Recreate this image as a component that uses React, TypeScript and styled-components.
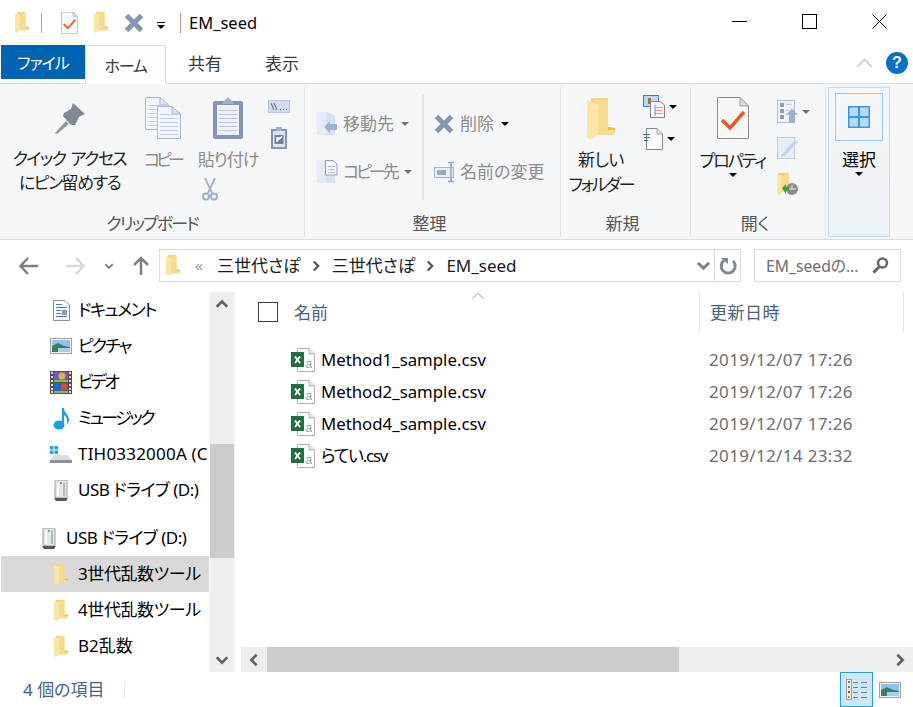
import styled, { createGlobalStyle } from "styled-components";

const GlobalStyle = createGlobalStyle`
  html, body {
    margin: 0;
    padding: 0;
    background: #fff;
  }
  * {
    box-sizing: border-box;
  }
`;

const Folder = ({ w = 14, h = 21 }: { w?: number; h?: number }) => (
  <svg width={w} height={h} viewBox="0 0 14 21">
    <path d="M2 0H10.500V14.500L14 15V17L4 18L2 17Z" fill="#f5d77f" />
    <path d="M10.500 14.500L14 15V17H9Z" fill="#e8bd5c" />
    <path d="M0 1L5.500 3.500V18.500L1.500 21L0 19.500Z" fill="#fbe6a6" />
    <path d="M5.500 3.500V18.500H13.500V16H10.500V1H3Z" fill="#f7dc8b" />
  </svg>
);

const PropsIcon = ({ w, h }: { w: number; h: number }) => (
  <svg width={w} height={h} viewBox="0 0 32 42">
    <path d="M.5.500H23L31.500 9V41.500H.5Z" fill="#f8f8f8" stroke="#8d8d8d" />
    <path d="M23 .5V9H31.500Z" fill="#dcdcdc" stroke="#a0a0a0" />
    <path d="M5 23L13 31L27 15" fill="none" stroke="#ea5a1d" strokeWidth="3.500" />
  </svg>
);

const CrossIcon = ({ s, c = "#8496b0" }: { s: number; c?: string }) => (
  <svg width={s} height={s} viewBox="0 0 20 20">
    <path d="M2.500 2.500L17.500 17.500M17.500 2.500L2.500 17.500" stroke={c} strokeWidth="5" />
  </svg>
);

const PinIcon = () => (
  <svg width="32" height="32" viewBox="0 0 32 32">
    <path d="M19 1L31 12L25 15L21 23L17 23L9 14L10 11L17 7Z" fill="#7f8a94" />
    <path d="M12 19L1 31L3 32L15 22Z" fill="#8f979f" />
  </svg>
);

const PageLines = ({ x, y }: { x: number; y: number }) => (
  <g transform={`translate(${x} ${y})`}>
    <path d="M.5.500H15L23.500 8V32.500H.5Z" fill="#f2f5fb" stroke="#a9b8d2" />
    <path d="M15 .5V8H23.500Z" fill="#dbe3f0" stroke="#a9b8d2" />
    {[8, 12, 16, 20, 24, 28].map((l) => (
      <path key={l} d={`M3 ${l}.5H21`} stroke="#c3cfe3" />
    ))}
  </g>
);

const CopyIcon = () => (
  <svg width="36" height="42" viewBox="0 0 36 42">
    <PageLines x={0} y={0} />
    <PageLines x={12} y={9} />
  </svg>
);

const ClipboardIcon = () => (
  <svg width="30" height="42" viewBox="0 0 30 42">
    <rect x="0" y="4" width="30" height="38" rx="2" fill="#8494b4" />
    <rect x="4" y="8" width="22" height="30" fill="#eef1f8" />
    {[13, 17, 21, 25, 29, 33].map((l) => (
      <path key={l} d={`M6 ${l}.5H24`} stroke="#bfc9dc" />
    ))}
    <path d="M9 7L12 3L15 0L18 3L21 7Z" fill="#a5b1c8" />
  </svg>
);

const PathIcon = () => (
  <svg width="22" height="13" viewBox="0 0 22 13">
    <rect x=".5" y=".5" width="21" height="12" fill="#cfdcef" stroke="#b7c8df" />
    <path d="M3 3L6 10M6 3L9 10" stroke="#55657f" />
    <path d="M12 9.500H13M15 9.500H16M18 9.500H19" stroke="#55657f" />
  </svg>
);

const ShortcutIcon = () => (
  <svg width="16" height="22" viewBox="0 0 16 22">
    <rect x="0" y="2" width="16" height="20" fill="#8494b4" />
    <rect x="2" y="4" width="12" height="16" fill="#dfe5f0" />
    <rect x="5" y="0" width="6" height="4" fill="#a5b1c8" />
    <rect x="3.500" y="8" width="9" height="9" fill="#6f80a0" />
    <path d="M6 15V11H10M7 13L11 9.500" fill="none" stroke="#fff" strokeWidth="1.600" />
  </svg>
);

const ScissorsIcon = () => (
  <svg width="16" height="23" viewBox="0 0 16 23">
    <path d="M3 0L10 15M13 0L6 15" stroke="#a3b1c8" strokeWidth="1.800" />
    <circle cx="4" cy="18.500" r="3" fill="none" stroke="#9fb0cb" strokeWidth="2" />
    <circle cx="12" cy="18.500" r="3" fill="none" stroke="#9fb0cb" strokeWidth="2" />
  </svg>
);

const MoveIcon = () => (
  <svg width="20" height="23" viewBox="0 0 20 23">
    <path d="M0 0H10L18 4V23H0Z" fill="#d6e1f1" />
    <path d="M0 0H9V23H0Z" fill="#e6ecf6" />
    <path d="M7 15L13 9V12H20V18H13V21Z" fill="#9fb3d0" />
  </svg>
);

const CopyToIcon = () => (
  <svg width="22" height="23" viewBox="0 0 22 23">
    <path d="M0 0H10L18 4V23H0Z" fill="#d6e1f1" />
    <path d="M0 0H9V23H0Z" fill="#e6ecf6" />
    <path d="M8.500 .5H16L20 4V15H8.500Z" fill="#f5f7fb" stroke="#8f9db3" />
    <path d="M11 6.500H18M11 9.500H18M11 12.500H18" stroke="#b2bdcd" />
  </svg>
);

const RenameIcon = () => (
  <svg width="22" height="22" viewBox="0 0 22 22">
    <rect x=".5" y="6.500" width="19" height="10" fill="#e8eef7" stroke="#a7b6cc" />
    <rect x="3" y="9" width="9" height="5" fill="#97a8c2" />
    <path d="M14 1.500H20M14 20.500H20M17 1.500V20.500" stroke="#93a4bf" strokeWidth="1.500" />
  </svg>
);

const NewItemsIcon = () => (
  <svg width="22" height="23" viewBox="0 0 22 23">
    <rect x=".5" y=".5" width="15" height="11" fill="#bdd7ee" stroke="#3f7cb5" />
    <rect x="5" y="3" width="3" height="6" fill="#8c7a48" />
    <path d="M7.500 6.500H17L21.500 10V22.500H7.500Z" fill="#fafafa" stroke="#858585" />
    <path d="M12 12.500H20M12 15.500H20M12 18.500H20" stroke="#e09aa5" />
    <path d="M12 9.500V21" stroke="#6d8fc4" />
  </svg>
);

const NewPageIcon = () => (
  <svg width="20" height="22" viewBox="0 0 20 22">
    <path d="M3.500 .5H14L19.500 6V21.500H3.500Z" fill="#fbfbfb" stroke="#858585" />
    <path d="M14 .5V6H19.500" fill="#e4e4e4" stroke="#a0a0a0" />
    <path d="M0 6.500H7M1 9.500H7M1 12.500H5" stroke="#2a6ba8" />
  </svg>
);

const OpenIcon = () => (
  <svg width="21" height="23" viewBox="0 0 21 23">
    <rect x=".5" y=".5" width="17" height="22" fill="#eef2f8" stroke="#b2bfd2" />
    {[3, 9, 15].map((t) => (
      <rect key={t} x="3" y={t} width="4" height="4" fill="#8b9cb6" />
    ))}
    <path d="M9 4.500H15M9 10.500H12" stroke="#c3cddc" />
    <path d="M9 15L15 8.500L21 15H18V23H12V15Z" fill="#9db0cb" />
  </svg>
);

const EditIcon = () => (
  <svg width="21" height="22" viewBox="0 0 21 22">
    <rect x=".5" y=".5" width="17" height="21" fill="#e8eef7" stroke="#bfcbdd" />
    <path d="M5 17L18 3L21 5L8 19L4 20Z" fill="#c9d5e6" stroke="#dfe6f0" />
  </svg>
);

const HistoryIcon = () => (
  <svg width="21" height="23" viewBox="0 0 21 23">
    <path d="M1 0H12V14H1Z" fill="#f3d27a" />
    <path d="M0 1L4 3V21L1 23L0 21Z" fill="#fbe6a6" />
    <path d="M4 3V19H12V1Z" fill="#f7dc8b" />
    <circle cx="15" cy="16" r="6" fill="#8a8f8a" />
    <path d="M11 16H19M15 12V16" stroke="#e6e6e6" />
    <path d="M5 15L9 11V14H12V18H9V21Z" fill="#3aa53a" />
  </svg>
);

const SelectIcon = () => (
  <svg width="22" height="22" viewBox="0 0 22 22">
    <rect width="22" height="22" fill="#2f9be8" />
    <rect x="1.500" y="1.500" width="8.500" height="8.500" fill="#b4dcf8" />
    <rect x="12" y="1.500" width="8.500" height="8.500" fill="#b4dcf8" />
    <rect x="1.500" y="12" width="8.500" height="8.500" fill="#b4dcf8" />
    <rect x="12" y="12" width="8.500" height="8.500" fill="#b4dcf8" />
  </svg>
);

const ArrowIcon = ({ dir, c }: { dir: "left" | "right" | "up"; c: string }) => {
  const d = {
    left: "M1 10H19M9 2L1.500 10L9 18",
    right: "M1 10H19M11 2L18.500 10L11 18",
    up: "M10 19V2M3 9L10 2L17 9",
  }[dir];
  return (
    <svg width="20" height="20" viewBox="0 0 20 20">
      <path d={d} fill="none" stroke={c} strokeWidth="2.500" />
    </svg>
  );
};

const Chevron = ({ dir, w = 14, c = "#606060" }: { dir: "up" | "down" | "left" | "right"; w?: number; c?: string }) => {
  const d = {
    up: "M2 10L8 4L14 10",
    down: "M2 5L8 11L14 5",
    left: "M11 2L5 8L11 14",
    right: "M5 2L11 8L5 14",
  }[dir];
  return (
    <svg width={w} height={w} viewBox="0 0 16 16">
      <path d={d} fill="none" stroke={c} strokeWidth="3" />
    </svg>
  );
};

const RefreshIcon = () => (
  <svg width="18" height="18" viewBox="0 0 18 18">
    <path d="M5 3.500A7 7 0 1 0 14 4" fill="none" stroke="#7d8a96" strokeWidth="3" />
    <path d="M2 1H9V7Z" fill="#7d8a96" />
  </svg>
);

const SearchIcon = () => (
  <svg width="17" height="17" viewBox="0 0 17 17">
    <circle cx="10.500" cy="6" r="4.500" fill="none" stroke="#666" strokeWidth="2.500" />
    <path d="M7 10L1.500 15.500" stroke="#666" strokeWidth="3" />
  </svg>
);

const DocNavIcon = () => (
  <svg width="17" height="21" viewBox="0 0 17 21">
    <path d="M.5.500H12L16.500 5V20.500H.5Z" fill="#fafafa" stroke="#8c8c8c" />
    <path d="M3 4.500H9M3 7.500H14M3 10.500H8M3 13.500H8M3 16.500H14" stroke="#3c83c4" />
    <rect x="9" y="10" width="5" height="5" fill="#7f9fb5" />
  </svg>
);

const PictureIcon = ({ w = 22, h = 16 }: { w?: number; h?: number }) => (
  <svg width={w} height={h} viewBox="0 0 22 16">
    <rect x=".5" y=".5" width="21" height="15" fill="#f4f4f4" stroke="#a3a3a3" />
    <rect x="2" y="2" width="18" height="12" fill="#8cc4ee" />
    <path d="M2 8L8 5L14 8L20 9V14H2Z" fill="#3f7d6a" />
    <path d="M8 10H20V14H8Z" fill="#a9cfe6" />
  </svg>
);

const VideoIcon = () => (
  <svg width="22" height="23" viewBox="0 0 22 23">
    <rect width="22" height="23" fill="#505050" />
    {[1, 5, 9, 13, 17, 20].map((t) => (
      <g key={t}>
        <rect x="1" y={t} width="2" height="2" fill="#ddd" />
        <rect x="19" y={t} width="2" height="2" fill="#ddd" />
      </g>
    ))}
    <rect x="4" y="1" width="14" height="10" fill="#6f58c9" />
    <rect x="4" y="12" width="14" height="10" fill="#1e66d0" />
    <circle cx="12" cy="5" r="3.500" fill="#e3b23c" />
    <circle cx="14" cy="16" r="3.500" fill="#d4492d" />
    <path d="M4 10H18M4 21H18" stroke="#8fbf3f" strokeWidth="2" />
  </svg>
);

const MusicIcon = () => (
  <svg width="17" height="23" viewBox="0 0 17 23">
    <ellipse cx="6" cy="18" rx="5.500" ry="4.500" fill="#1b9fe6" />
    <path d="M9 18V1H11C11 6 16 7 16 13C16 15 15 16 14 17C14.500 12 13 9 11 8V18Z" fill="#1b9fe6" />
  </svg>
);

const DriveIcon = () => (
  <svg width="22" height="17" viewBox="0 0 22 17">
    <path d="M4 9H18L22 14V17H0V14Z" fill="#d9dcdf" />
    <path d="M0 14H22V17H0Z" fill="#8b9096" />
    <rect x="0" y="0" width="3.500" height="3.500" fill="#1fa5e8" />
    <rect x="4.500" y="0" width="3.500" height="3.500" fill="#1fa5e8" />
    <rect x="0" y="4.500" width="3.500" height="3.500" fill="#1fa5e8" />
    <rect x="4.500" y="4.500" width="3.500" height="3.500" fill="#1fa5e8" />
  </svg>
);

const UsbIcon = () => (
  <svg width="14" height="21" viewBox="0 0 14 21">
    <rect x="1" y="0" width="12" height="18" rx="1" fill="#e4e6e6" stroke="#9a9e9e" />
    <rect x="3" y="3" width="2" height="13" fill="#fff" />
    <rect x="9" y="3" width="2" height="13" fill="#b4b8b8" />
    <rect x="6" y="2" width="2" height="2" fill="#5fb85f" />
    <path d="M0 18H14L12 21H2Z" fill="#555" />
  </svg>
);

const ExcelIcon = () => (
  <svg width="24" height="24" viewBox="0 0 24 24">
    <path d="M6.500.5H18L23.500 6V23.500H6.500Z" fill="#fff" stroke="#b0b0b0" />
    <path d="M18 .5V6H23.500" fill="#e8e8e8" stroke="#b0b0b0" />
    <rect x="0" y="4" width="13" height="15" fill="#1e7145" />
    <path d="M4 8.500L9 15M9 8.500L4 15" stroke="#fff" strokeWidth="2" />
    <text x="14.500" y="20" fontSize="12" fill="#7fb89a" fontFamily="Liberation Sans, sans-serif">
      a
    </text>
  </svg>
);

const DetailsIcon = () => (
  <svg width="21" height="21" viewBox="0 0 21 21">
    <rect x=".5" y=".5" width="5" height="20" fill="#eee" stroke="#a0a0a0" />
    <rect x="2" y="2" width="2" height="2" fill="#3f7fbf" />
    <rect x="2" y="7" width="2" height="2" fill="#8a7a2a" />
    <rect x="2" y="12" width="2" height="2" fill="#b03a1e" />
    <rect x="2" y="17" width="2" height="2" fill="#a0a070" />
    {[3, 8, 13, 18].map((t) => (
      <path key={t} d={`M7 ${t}.5H12M15 ${t}.5H21`} stroke="#7a7a7a" />
    ))}
  </svg>
);

const navItems = [
  { label: "ドキュメント", icon: <DocNavIcon />, level: 2, ls: -1.5 },
  { label: "ピクチャ", icon: <PictureIcon />, level: 2, ls: -2 },
  { label: "ビデオ", icon: <VideoIcon />, level: 2, ls: -2.6 },
  { label: "ミュージック", icon: <MusicIcon />, level: 2, ls: -2.5 },
  { label: "TIH0332000A (C", icon: <DriveIcon />, level: 2, ls: 0.2 },
  { label: "USB ドライブ (D:)", icon: <UsbIcon />, level: 2, ls: -0.5, last: true },
  { label: "USB ドライブ (D:)", icon: <UsbIcon />, level: 1, ls: -0.5 },
  { label: "3世代乱数ツール", icon: <Folder />, level: 2, ls: -0.4, selected: true },
  { label: "4世代乱数ツール", icon: <Folder />, level: 2, ls: -0.4 },
  { label: "B2乱数", icon: <Folder />, level: 2, ls: 0 },
];

const files = [
  { name: "Method1_sample.csv", date: "2019/12/07 17:26", ls: 0 },
  { name: "Method2_sample.csv", date: "2019/12/07 17:26", ls: 0 },
  { name: "Method4_sample.csv", date: "2019/12/07 17:26", ls: 0 },
  { name: "らてい.csv", date: "2019/12/14 23:32", ls: -1.2 },
];

export default function App() {
  return (
    <Window>
      <GlobalStyle />
      <TitleBar>
        <Folder />
        <QuickSep />
        <PropsMini>
          <PropsIcon w={17} h={22} />
        </PropsMini>
        <Folder />
        <QuickCross>
          <CrossIcon s={20} />
        </QuickCross>
        <QuickMenu>
          <MenuBar />
          <Caret />
        </QuickMenu>
        <TitleSep />
        <TitleText>EM_seed</TitleText>
        <WindowControls>
          <ControlCell>
            <svg width="15" height="15" viewBox="0 0 15 15">
              <path d="M0 7.500H15" stroke="#000" />
            </svg>
          </ControlCell>
          <ControlCell>
            <svg width="15" height="15" viewBox="0 0 15 15">
              <rect x=".5" y=".5" width="14" height="14" fill="none" stroke="#000" />
            </svg>
          </ControlCell>
          <ControlCell>
            <svg width="15" height="15" viewBox="0 0 15 15">
              <path d="M.5.500L14.500 14.500M14.500.5L.5 14.500" stroke="#000" />
            </svg>
          </ControlCell>
        </WindowControls>
      </TitleBar>

      <TabBar>
        <FileTab>ファイル</FileTab>
        <HomeTab>ホーム</HomeTab>
        <Tab $w={78}>共有</Tab>
        <Tab $w={76}>表示</Tab>
        <TabEnd>
          <svg width="17" height="10" viewBox="0 0 17 10">
            <path d="M1 9L8.500 1.500L16 9" fill="none" stroke="#c4c4c4" strokeWidth="1.500" />
          </svg>
          <HelpBadge>?</HelpBadge>
        </TabEnd>
      </TabBar>

      <Ribbon>
        <Group $w={305}>
          <GroupBody>
            <LargeButton $w={139} $pad={18}>
              <IconSlot $h={45}>
                <PinIcon />
              </IconSlot>
              <PinText>
                クイック アクセス
                <br />
                にピン留めする
              </PinText>
            </LargeButton>
            <ClipColumn>
              <ClipTop>
                <LargeButton $w={43} $pad={13} $disabled>
                  <IconSlot $h={50}>
                    <CopyIcon />
                  </IconSlot>
                  <LargeText $ls={-4}>コピー</LargeText>
                </LargeButton>
                <LargeButton $w={88} $pad={13} $disabled>
                  <IconSlot $h={50}>
                    <ClipboardIcon />
                  </IconSlot>
                  <LargeText $ls={-1}>貼り付け</LargeText>
                </LargeButton>
              </ClipTop>
              <ScissorsSlot>
                <ScissorsIcon />
              </ScissorsSlot>
            </ClipColumn>
            <SmallColumn>
              <PathIcon />
              <ShortcutSlot>
                <ShortcutIcon />
              </ShortcutSlot>
            </SmallColumn>
          </GroupBody>
          <GroupLabel $ls={-1.9}>クリップボード</GroupLabel>
        </Group>

        <Group $w={256}>
          <GroupBody>
            <OrganizeColumn $w={117}>
              <OrganizeRow>
                <OrganizeIcon>
                  <MoveIcon />
                </OrganizeIcon>
                <OrganizeText>移動先</OrganizeText>
                <Caret $gray />
              </OrganizeRow>
              <OrganizeRow>
                <OrganizeIcon>
                  <CopyToIcon />
                </OrganizeIcon>
                <OrganizeText $ls={-3}>コピー先</OrganizeText>
                <Caret $gray />
              </OrganizeRow>
            </OrganizeColumn>
            <OrganizeDivider />
            <OrganizeColumn $w={130} $pad={10}>
              <OrganizeRow>
                <OrganizeIcon>
                  <CrossIcon s={20} />
                </OrganizeIcon>
                <OrganizeText>削除</OrganizeText>
                <Caret />
              </OrganizeRow>
              <OrganizeRow>
                <OrganizeIcon>
                  <RenameIcon />
                </OrganizeIcon>
                <OrganizeText>名前の変更</OrganizeText>
              </OrganizeRow>
            </OrganizeColumn>
          </GroupBody>
          <GroupLabel $shift={6}>整理</GroupLabel>
        </Group>

        <Group $w={130}>
          <GroupBody>
            <LargeButton $w={80} $pad={14}>
              <IconSlot $h={49}>
                <Folder w={28} h={42} />
              </IconSlot>
              <LargeText $ls={-0.5}>新しい</LargeText>
              <LargeText $ls={-2.2}>フォルダー</LargeText>
            </LargeButton>
            <MiniColumn>
              <MiniRow>
                <NewItemsIcon />
                <Caret />
              </MiniRow>
              <MiniRow>
                <NewPageIcon />
                <Caret />
              </MiniRow>
            </MiniColumn>
          </GroupBody>
          <GroupLabel $shift={6}>新規</GroupLabel>
        </Group>

        <Group $w={135}>
          <GroupBody>
            <LargeButton $w={83} $pad={13}>
              <IconSlot $h={51}>
                <PropsIcon w={32} h={42} />
              </IconSlot>
              <LargeText $ls={-2}>プロパティ</LargeText>
              <Caret />
            </LargeButton>
            <OpenColumn>
              <MiniRow>
                <OpenIcon />
                <Caret $gray />
              </MiniRow>
              <EditIcon />
              <HistoryIcon />
            </OpenColumn>
          </GroupBody>
          <GroupLabel $shift={6}>開く</GroupLabel>
        </Group>

        <SelectPanel>
          <SelectButton>
            <SelectIcon />
          </SelectButton>
          <LargeText>選択</LargeText>
          <Caret />
        </SelectPanel>
      </Ribbon>

      <AddressRow>
        <NavButtons>
          <ArrowIcon dir="left" c="#7f7f7f" />
          <ArrowIcon dir="right" c="#d6d6d6" />
          <HistoryChevron>
            <Chevron dir="down" w={10} c="#7f7f7f" />
          </HistoryChevron>
          <ArrowIcon dir="up" c="#7f7f7f" />
        </NavButtons>
        <AddressBox>
          <Folder />
          <Overflow>«</Overflow>
          <Crumb>三世代さぽ</Crumb>
          <CrumbSep>
            <Chevron dir="right" w={12} c="#555" />
          </CrumbSep>
          <Crumb>三世代さぽ</Crumb>
          <CrumbSep>
            <Chevron dir="right" w={12} c="#555" />
          </CrumbSep>
          <Crumb>EM_seed</Crumb>
          <AddressEnd>
            <Chevron dir="down" w={15} c="#7f7f7f" />
            <RefreshCell>
              <RefreshIcon />
            </RefreshCell>
          </AddressEnd>
        </AddressBox>
        <SearchBox>
          <SearchText>EM_seedの...</SearchText>
          <SearchIcon />
        </SearchBox>
      </AddressRow>

      <Main>
        <NavPane>
          {navItems.map((item, i) => (
            <NavRow key={i} $selected={item.selected} $last={item.last}>
              <NavIcon $level={item.level}>{item.icon}</NavIcon>
              <NavLabel $ls={item.ls}>{item.label}</NavLabel>
            </NavRow>
          ))}
        </NavPane>
        <VScroll>
          <ScrollCap>
            <Chevron dir="up" w={14} />
          </ScrollCap>
          <VTrack>
            <VThumb />
          </VTrack>
          <ScrollCap>
            <Chevron dir="down" w={14} />
          </ScrollCap>
        </VScroll>
        <PaneGap />
        <Content>
          <HeaderRow>
            <NameHeader>
              <SortCaret>
                <svg width="12" height="6" viewBox="0 0 12 6">
                  <path d="M.5 5.500L6 .5L11.500 5.500" fill="none" stroke="#9a9a9a" />
                </svg>
              </SortCaret>
              <CheckBox />
              <HeaderText>名前</HeaderText>
            </NameHeader>
            <DateHeader>
              <HeaderText $ls={0.5}>更新日時</HeaderText>
            </DateHeader>
          </HeaderRow>
          <FileList>
            {files.map((f) => (
              <FileRow key={f.name}>
                <ExcelIcon />
                <FileName $ls={f.ls}>{f.name}</FileName>
                <FileDate>{f.date}</FileDate>
              </FileRow>
            ))}
          </FileList>
          <HScroll>
            <HCap>
              <Chevron dir="left" w={14} />
            </HCap>
            <HThumb />
            <HCapEnd>
              <Chevron dir="right" w={14} />
            </HCapEnd>
          </HScroll>
        </Content>
      </Main>

      <StatusBar>
        <StatusText>4 個の項目</StatusText>
        <StatusSep />
        <ViewButtons>
          <ViewActive>
            <DetailsIcon />
          </ViewActive>
          <PictureIcon />
        </ViewButtons>
      </StatusBar>
    </Window>
  );
}

const Window = styled.div`
  display: flex;
  flex-direction: column;
  width: 913px;
  height: 707px;
  overflow: hidden;
  background: #fff;
  color: #000;
  font-family: "Noto Sans", "Noto Sans CJK JP", sans-serif;
  font-size: 17px;
  font-feature-settings: "palt";
`;

const TitleBar = styled.div`
  display: flex;
  align-items: center;
  height: 45px;
  padding-left: 15px;
`;

const QuickSep = styled.div`
  width: 1px;
  height: 20px;
  margin: 0 19px 0 12px;
  background: #a0a0a0;
`;

const PropsMini = styled.div`
  display: flex;
  margin-right: 16px;
`;

const QuickCross = styled.div`
  display: flex;
  margin: 0 12px 0 16px;
`;

const QuickMenu = styled.div`
  display: flex;
  flex-direction: column;
  gap: 2px;
  align-items: center;
  width: 9px;
  margin-top: 5px;
`;

const MenuBar = styled.div`
  width: 8px;
  height: 1px;
  background: #000;
`;

const TitleSep = styled.div`
  width: 1px;
  height: 20px;
  margin: 0 8px 0 15px;
  background: #a0a0a0;
`;

const TitleText = styled.div`
  font-size: 16.500px;
  line-height: 20px;
`;

const WindowControls = styled.div`
  display: flex;
  margin-left: auto;
  margin-top: -2px;
  padding-right: 26px;
  gap: 55px;
`;

const ControlCell = styled.div`
  display: flex;
`;

const TabBar = styled.div`
  display: flex;
  height: 39px;
  padding-left: 1px;
  border-bottom: 1px solid #dadbdc;
`;

const FileTab = styled.div`
  display: flex;
  align-items: center;
  justify-content: center;
  width: 84px;
  height: 34px;
  background: #0063b1;
  color: #fff;
  font-size: 16px;
  letter-spacing: -1px;
`;

const HomeTab = styled.div`
  display: flex;
  align-items: center;
  justify-content: center;
  width: 81px;
  height: 39px;
  border: 1px solid #dadbdc;
  border-bottom: none;
  background: #fdfdfd;
  color: #3b3b3b;
  font-size: 16px;
  letter-spacing: -1.300px;
`;

const Tab = styled.div<{ $w: number }>`
  display: flex;
  align-items: center;
  justify-content: center;
  width: ${({ $w }) => $w}px;
  padding-bottom: 3px;
  color: #3b3b3b;
  font-size: 17px;
`;

const TabEnd = styled.div`
  display: flex;
  align-items: center;
  gap: 13px;
  margin-left: auto;
  padding: 0 5px 3px 0;
`;

const HelpBadge = styled.div`
  display: flex;
  align-items: center;
  justify-content: center;
  width: 22px;
  height: 22px;
  border-radius: 50%;
  background: #0a6fc9;
  color: #fff;
  font-family: "Liberation Sans", sans-serif;
  font-size: 16px;
  font-weight: 700;
`;

const Ribbon = styled.div`
  display: flex;
  height: 156px;
  border-bottom: 1px solid #dadbdc;
  background: #f5f6f7;
`;

const Group = styled.div<{ $w: number }>`
  display: flex;
  flex-direction: column;
  flex: none;
  width: ${({ $w }) => $w}px;
  margin: 3px 0 2px;
  border-right: 1px solid #e1e3e6;
`;

const GroupBody = styled.div`
  display: flex;
  flex: 1;
  min-height: 0;
`;

const GroupLabel = styled.div<{ $ls?: number; $shift?: number }>`
  height: 35px;
  padding-top: 10px;
  padding-right: ${({ $shift }) => $shift ?? 0}px;
  color: #555;
  font-size: 17px;
  letter-spacing: ${({ $ls }) => $ls ?? 0}px;
  line-height: 24px;
  text-align: center;
`;

const LargeButton = styled.div<{ $w: number; $pad: number; $disabled?: boolean }>`
  display: flex;
  flex-direction: column;
  flex: none;
  align-items: center;
  width: ${({ $w }) => $w}px;
  padding-top: ${({ $pad }) => $pad - 3}px;
  color: ${({ $disabled }) => ($disabled ? "#8c8c8c" : "#1f1f1f")};
`;

const IconSlot = styled.div<{ $h: number }>`
  display: flex;
  align-items: flex-start;
  justify-content: center;
  height: ${({ $h }) => $h}px;
`;

const LargeText = styled.div<{ $ls?: number }>`
  font-size: 17px;
  letter-spacing: ${({ $ls }) => $ls ?? 0}px;
  line-height: 25px;
  text-align: center;
  white-space: nowrap;
`;

const PinText = styled(LargeText)`
  letter-spacing: -1.500px;
  line-height: 24px;
  word-spacing: 2px;
`;

const ClipColumn = styled.div`
  display: flex;
  flex-direction: column;
  margin-left: 2px;
`;

const ClipTop = styled.div`
  display: flex;
`;

const ScissorsSlot = styled.div`
  display: flex;
  margin: 6px 0 0 61px;
`;

const SmallColumn = styled.div`
  display: flex;
  flex-direction: column;
  padding-top: 13px;
  margin-left: -4px;
`;

const ShortcutSlot = styled.div`
  display: flex;
  margin: 14px 0 0 3px;
`;

const OrganizeColumn = styled.div<{ $w: number; $pad?: number }>`
  display: flex;
  flex-direction: column;
  flex: none;
  gap: 25px;
  width: ${({ $w }) => $w}px;
  padding: 25px 0 0 ${({ $pad }) => $pad ?? 12}px;
`;

const OrganizeRow = styled.div`
  display: flex;
  align-items: center;
  height: 23px;
  color: #8c8c8c;
`;

const OrganizeIcon = styled.div`
  display: flex;
  justify-content: flex-start;
  width: 26px;
`;

const OrganizeText = styled.div<{ $ls?: number }>`
  margin-right: 7px;
  font-size: 17px;
  letter-spacing: ${({ $ls }) => $ls ?? 0}px;
  line-height: 23px;
  white-space: nowrap;
`;

const OrganizeDivider = styled.div`
  width: 2px;
  height: 106px;
  margin-top: 7px;
  background: #e1e3e6;
`;

const MiniColumn = styled.div`
  display: flex;
  flex-direction: column;
  gap: 10px;
  padding-top: 8px;
  margin-left: 2px;
`;

const MiniRow = styled.div`
  display: flex;
  align-items: center;
  gap: 4px;
`;

const OpenColumn = styled.div`
  display: flex;
  flex-direction: column;
  gap: 14px;
  padding-top: 13px;
  margin-left: 3px;
`;

const Caret = styled.div<{ $gray?: boolean }>`
  flex: none;
  width: 0;
  height: 0;
  border-top: 4px solid ${({ $gray }) => ($gray ? "#707070" : "#000")};
  border-right: 4px solid transparent;
  border-left: 4px solid transparent;
`;

const SelectPanel = styled.div`
  display: flex;
  flex-direction: column;
  align-items: center;
  flex: none;
  width: 62px;
  margin: 3px 0 2px 2px;
  padding-top: 5px;
  border: 1px solid #bfdcf5;
  background: linear-gradient(#f5f6f7, #edf2f7);
`;

const SelectButton = styled.div`
  display: flex;
  align-items: center;
  justify-content: center;
  flex: none;
  width: 48px;
  height: 48px;
  margin-bottom: 6px;
  border: 1px solid #99ccf5;
`;

const AddressRow = styled.div`
  display: flex;
  height: 52px;
  padding: 9px 12px 0 0;
`;

const NavButtons = styled.div`
  display: flex;
  align-items: center;
  gap: 26px;
  width: 159px;
  height: 33px;
  padding-left: 19px;
`;

const HistoryChevron = styled.div`
  display: flex;
  margin: 0 -9px 0 -7px;
`;

const AddressBox = styled.div`
  display: flex;
  align-items: center;
  width: 582px;
  height: 33px;
  padding-left: 6px;
  border: 1px solid #d9d9d9;
`;

const Overflow = styled.div`
  width: 37px;
  padding-left: 15px;
  color: #8a8a8a;
  font-family: "Liberation Sans", sans-serif;
  font-size: 14px;
`;

const Crumb = styled.div`
  color: #1a1a1a;
  font-size: 17px;
  line-height: 24px;
  white-space: nowrap;
`;

const CrumbSep = styled.div`
  display: flex;
  margin: 0 10px 0 9px;
`;

const AddressEnd = styled.div`
  display: flex;
  align-items: center;
  align-self: stretch;
  margin-left: auto;
`;

const RefreshCell = styled.div`
  display: flex;
  align-items: center;
  justify-content: center;
  align-self: stretch;
  width: 26px;
  margin-left: 3px;
  border-left: 1px solid #d9d9d9;
`;

const SearchBox = styled.div`
  display: flex;
  align-items: center;
  justify-content: space-between;
  width: 147px;
  height: 33px;
  margin-left: 13px;
  padding: 0 11px;
  border: 1px solid #d9d9d9;
`;

const SearchText = styled.div`
  color: #6d6d6d;
  font-size: 15.700px;
  white-space: nowrap;
`;

const Main = styled.div`
  display: flex;
  flex: none;
  height: 380px;
`;

const NavPane = styled.div`
  flex: none;
  width: 210px;
  overflow: hidden;
`;

const NavRow = styled.div<{ $selected?: boolean; $last?: boolean }>`
  display: flex;
  align-items: center;
  height: 36px;
  margin: 0 1px ${({ $last }) => ($last ? 12 : 0)}px;
  background: ${({ $selected }) => ($selected ? "#d9d9d9" : "transparent")};
`;

const NavIcon = styled.div<{ $level: number }>`
  display: flex;
  align-items: center;
  justify-content: center;
  flex: none;
  width: 24px;
  margin-left: ${({ $level }) => ($level === 1 ? 36 : 48)}px;
  margin-right: 5px;
`;

const NavLabel = styled.div<{ $ls: number }>`
  font-size: 17px;
  letter-spacing: ${({ $ls }) => $ls}px;
  line-height: 24px;
  white-space: nowrap;
`;

const VScroll = styled.div`
  display: flex;
  flex-direction: column;
  flex: none;
  width: 24px;
  background: #eee;
`;

const ScrollCap = styled.div`
  display: flex;
  align-items: center;
  justify-content: center;
  flex: none;
  height: 25px;
`;

const VTrack = styled.div`
  flex: 1;
  padding-top: 127px;
`;

const VThumb = styled.div`
  height: 114px;
  background: #ccc;
`;

const PaneGap = styled.div`
  flex: none;
  width: 7px;
  border-left: 1px solid #f4f4f4;
`;

const Content = styled.div`
  display: flex;
  flex-direction: column;
  flex: 1;
  min-width: 0;
`;

const HeaderRow = styled.div`
  display: flex;
  flex: none;
  height: 40px;
`;

const NameHeader = styled.div`
  position: relative;
  display: flex;
  align-items: center;
  width: 459px;
  padding: 0 0 0 17px;
  border-right: 1px solid #e5e5e5;
`;

const SortCaret = styled.div`
  position: absolute;
  top: 1px;
  left: 231px;
  display: flex;
`;

const CheckBox = styled.div`
  width: 20px;
  height: 20px;
  margin-right: 16px;
  border: 1px solid #3c3c3c;
`;

const HeaderText = styled.div<{ $ls?: number }>`
  margin-top: 2px;
  color: #4c607a;
  font-size: 17px;
  letter-spacing: ${({ $ls }) => $ls ?? 0}px;
  line-height: 24px;
`;

const DateHeader = styled.div`
  display: flex;
  align-items: center;
  width: 204px;
  padding-left: 10px;
  border-right: 1px solid #e5e5e5;
`;

const FileList = styled.div`
  flex: 1;
  padding-top: 12px;
`;

const FileRow = styled.div`
  display: flex;
  align-items: center;
  height: 32px;
  padding-left: 50px;
`;

const FileName = styled.div<{ $ls: number }>`
  width: 388px;
  margin-left: 6px;
  font-size: 16.800px;
  letter-spacing: ${({ $ls }) => $ls}px;
  line-height: 24px;
`;

const FileDate = styled.div`
  color: #6d6d6d;
  font-size: 17px;
  letter-spacing: 0.350px;
  line-height: 24px;
`;

const HScroll = styled.div`
  display: flex;
  flex: none;
  height: 25px;
  background: #eee;
`;

const HCap = styled.div`
  display: flex;
  align-items: center;
  justify-content: center;
  flex: none;
  width: 26px;
`;

const HThumb = styled.div`
  flex: none;
  width: 412px;
  background: #ccc;
`;

const HCapEnd = styled(HCap)`
  margin-left: auto;
`;

const StatusBar = styled.div`
  display: flex;
  flex: 1;
  align-items: center;
  padding-left: 23px;
`;

const StatusText = styled.div`
  width: 101px;
  color: #4c607a;
  font-size: 17px;
  line-height: 24px;
`;

const StatusSep = styled.div`
  width: 1px;
  height: 17px;
  background: #e5e5e5;
`;

const ViewButtons = styled.div`
  display: flex;
  align-items: center;
  gap: 6px;
  margin-left: auto;
  padding-right: 12px;
`;

const ViewActive = styled.div`
  display: flex;
  align-items: center;
  justify-content: center;
  width: 33px;
  height: 35px;
  border: 1px solid #26a0da;
  background: #cce8f6;
`;
